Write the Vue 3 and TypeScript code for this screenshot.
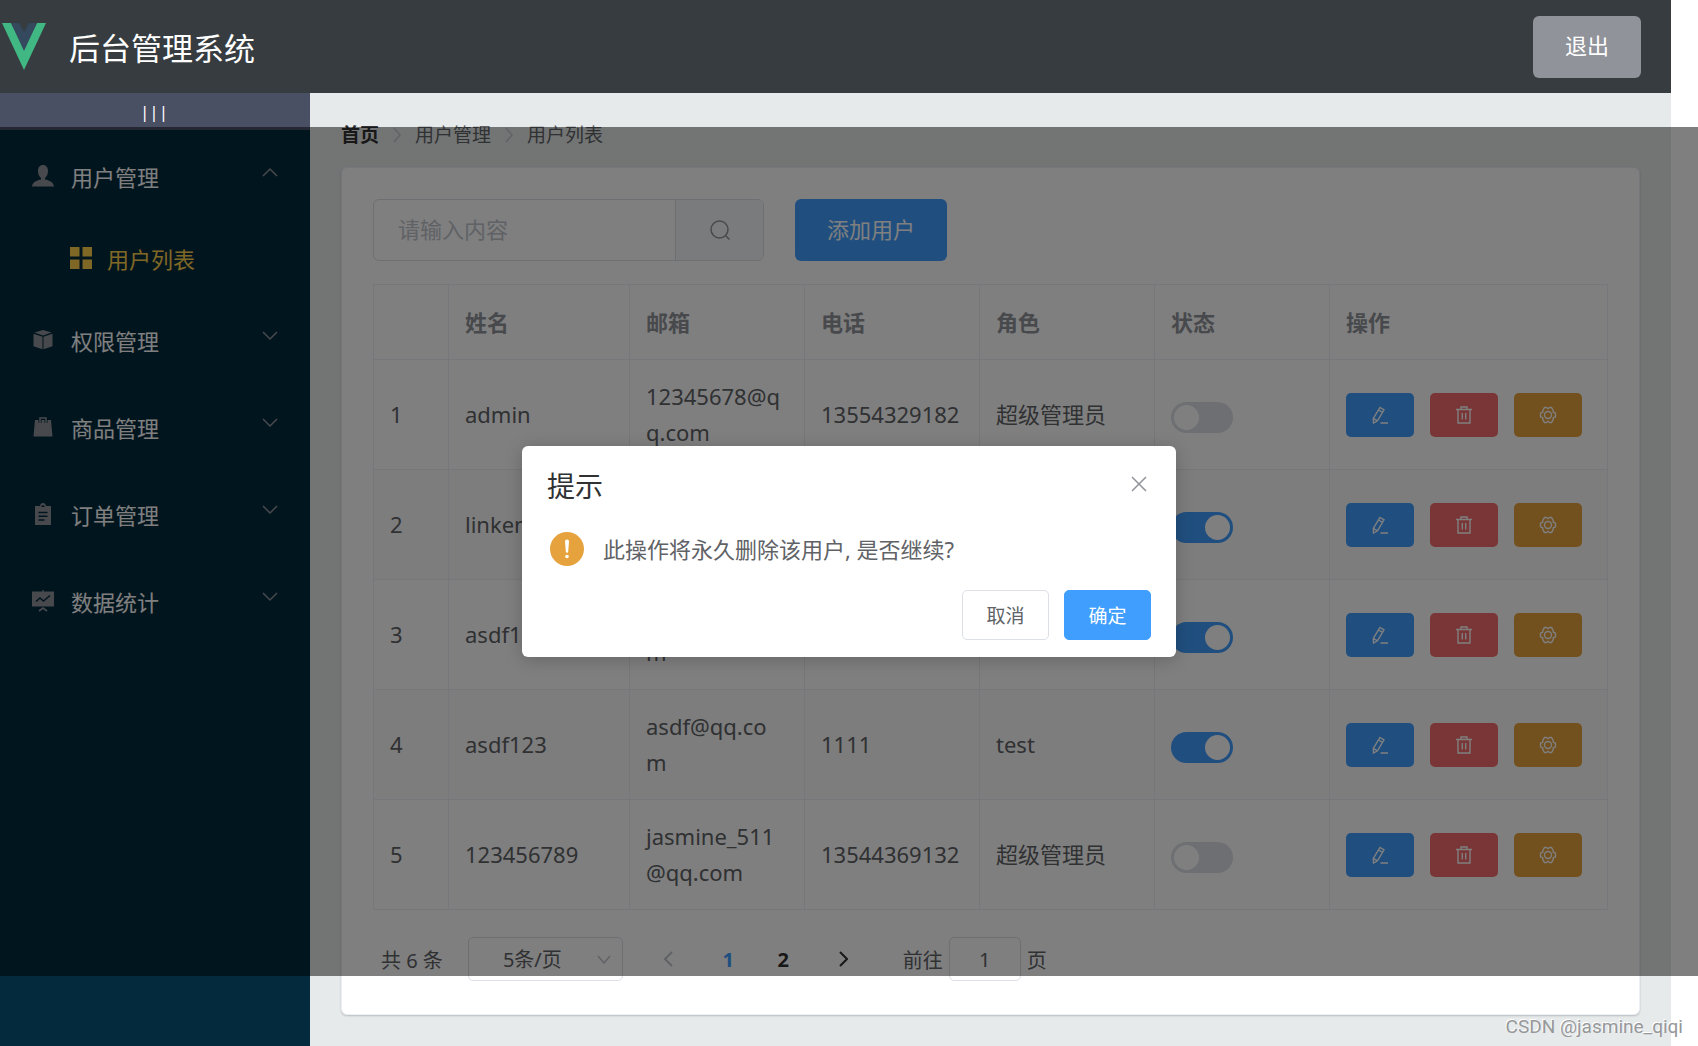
<script setup lang="ts">
import { ref } from 'vue'

interface User {
  id: number
  name: string
  email: string
  phone: string
  role: string
  active: boolean
}

interface Menu {
  title: string
  icon: 'user' | 'box' | 'bag' | 'order' | 'chart'
  children: string[]
}

const menus: Menu[] = [
  { title: '用户管理', icon: 'user', children: ['用户列表'] },
  { title: '权限管理', icon: 'box', children: [] },
  { title: '商品管理', icon: 'bag', children: [] },
  { title: '订单管理', icon: 'order', children: [] },
  { title: '数据统计', icon: 'chart', children: [] },
]

const users = ref<User[]>([
  { id: 1, name: 'admin', email: '12345678@qq.com', phone: '13554329182', role: '超级管理员', active: false },
  { id: 2, name: 'linken', email: '', phone: '', role: '', active: true },
  { id: 3, name: 'asdf1', email: 'asdf@qq.com', phone: '', role: '', active: true },
  { id: 4, name: 'asdf123', email: 'asdf@qq.com', phone: '1111', role: 'test', active: true },
  { id: 5, name: '123456789', email: 'jasmine_511@qq.com', phone: '13544369132', role: '超级管理员', active: false },
])

const query = ref('')
const pageSize = ref('5')
const jumpTo = ref('1')
</script>

<template>
  <div class="page">
    <header class="header">
      <svg class="logo" viewBox="0 0 44 47" aria-hidden="true">
        <path d="M0 0h9l13 25L35 0h9L22 47z" fill="#41b883" />
        <path d="M9 0h8l5 9 5-9h8L22 28z" fill="#35495e" />
      </svg>
      <h1 class="title">后台管理系统</h1>
      <button type="button" class="btn logout">退出</button>
    </header>

    <div class="body">
      <aside class="side">
        <button type="button" class="toggle">|||</button>
        <nav class="menu">
          <template v-for="m in menus" :key="m.title">
            <a href="#" class="item">
              <svg class="m-icon" viewBox="0 0 22 22" aria-hidden="true">
                <template v-if="m.icon === 'user'">
                  <path d="M11 0c3.300 0 5 2.500 5 6 0 3-1.300 5.800-3 7v1.500c4 .8 8.500 2.500 9 7H0c.5-4.500 5-6.200 9-7V13c-1.700-1.200-3-4-3-7 0-3.500 1.700-6 5-6z" />
                </template>
                <template v-else-if="m.icon === 'box'">
                  <path d="M11 1l8.500 2.600L11 6.400 2.500 3.600z" />
                  <path d="M1.500 4.800l9 3v12.400l-9-3z" />
                  <path d="M20.500 4.800l-9 3v12.400l9-3z" />
                </template>
                <template v-else-if="m.icon === 'bag'">
                  <path d="M3 4h16l1.500 16.500h-19z" />
                  <path d="M8 7V2h6v5" fill="none" stroke="#032a3d" stroke-width="3" />
                  <path d="M8 7V2h6v5" fill="none" stroke="#909399" stroke-width="1.500" />
                </template>
                <template v-else-if="m.icon === 'order'">
                  <path d="M3 3h5c.3-2 1.300-3 3-3s2.700 1 3 3h5v19H3z" />
                  <path d="M9.500 3.200h3" stroke="#032a3d" stroke-width="1.600" />
                  <path d="M6.500 9.500h9M6.500 13.200h9M6.500 17h6" stroke="#032a3d" stroke-width="1.500" />
                </template>
                <template v-else>
                  <path d="M0 1.500h10.300V0h1.400v1.500H22v15H0z" />
                  <path d="M7 21l4-3 4 3" fill="none" stroke="#909399" stroke-width="1.800" />
                  <path d="M4 11.500l4-3.500 3.500 3L18 5.500" fill="none" stroke="#032a3d" stroke-width="1.600" />
                </template>
              </svg>
              <span class="m-text">{{ m.title }}</span>
              <svg class="arrow" viewBox="0 0 16 10" aria-hidden="true">
                <path :d="m.children.length ? 'M1 9l7-7 7 7' : 'M1 1l7 7 7-7'" />
              </svg>
            </a>
            <a v-for="c in m.children" :key="c" href="#" class="sub">
              <svg class="m-icon" viewBox="0 0 22 22" aria-hidden="true">
                <path d="M0 0h9.500v9.500H0zM12.500 0H22v9.500h-9.500zM0 12.500h9.500V22H0zM12.500 12.500H22V22h-9.500z" />
              </svg>
              <span>{{ c }}</span>
            </a>
          </template>
        </nav>
      </aside>

      <main class="main">
        <nav class="crumbs">
          <a href="#" class="home">首页</a>
          <svg viewBox="0 0 8 16" aria-hidden="true"><path d="M1 1l6 7-6 7" /></svg>
          <span>用户管理</span>
          <svg viewBox="0 0 8 16" aria-hidden="true"><path d="M1 1l6 7-6 7" /></svg>
          <span>用户列表</span>
        </nav>

        <section class="card">
          <div class="tools">
            <div class="search">
              <input v-model="query" type="text" placeholder="请输入内容" aria-label="搜索用户" />
              <button type="button" aria-label="搜索">
                <svg viewBox="0 0 20 20" aria-hidden="true">
                  <circle cx="9.500" cy="9.500" r="8.500" />
                  <path d="M15.500 15.500l4 4" />
                </svg>
              </button>
            </div>
            <button type="button" class="btn primary">添加用户</button>
          </div>

          <table class="table">
            <colgroup>
              <col class="c-index" />
              <col class="c-name" />
              <col span="4" />
              <col class="c-ops" />
            </colgroup>
            <thead>
              <tr>
                <th></th>
                <th>姓名</th>
                <th>邮箱</th>
                <th>电话</th>
                <th>角色</th>
                <th>状态</th>
                <th>操作</th>
              </tr>
            </thead>
            <tbody>
              <tr v-for="u in users" :key="u.id">
                <td>{{ u.id }}</td>
                <td>{{ u.name }}</td>
                <td>{{ u.email }}</td>
                <td>{{ u.phone }}</td>
                <td>{{ u.role }}</td>
                <td><input v-model="u.active" type="checkbox" class="switch" :aria-label="'状态 ' + u.name" /></td>
                <td class="ops-cell">
                  <div class="ops">
                    <button type="button" class="op edit" aria-label="编辑">
                      <svg viewBox="0 0 18 18" aria-hidden="true">
                        <path d="M9 1.500l4 2.300-6.500 11L2.500 17l-.2-4.500zM7.500 4l4 2.300M2.500 12.500l4 2.300M9.500 17H17" />
                      </svg>
                    </button>
                    <button type="button" class="op delete" aria-label="删除">
                      <svg viewBox="0 0 18 18" aria-hidden="true">
                        <path d="M1 3.500h16M6 3.500V1h6v2.500M3 3.500V17h12V3.500M7.300 7v6.500M10.700 7v6.500" />
                      </svg>
                    </button>
                    <button type="button" class="op assign" aria-label="分配角色">
                      <svg viewBox="0 0 18 18" aria-hidden="true">
                        <path d="M5.500 1.500h2L9 2.700l1.500-1.200h2l1.700 3 .1 1.700 2.200 1v3.600l-2.200 1-.1 1.700-1.700 3h-2L9 15.300l-1.500 1.200h-2l-1.700-3-.1-1.700-2.200-1V7.200l2.200-1 .1-1.700z" />
                        <circle cx="9" cy="9" r="3.500" />
                      </svg>
                    </button>
                  </div>
                </td>
              </tr>
            </tbody>
          </table>

          <div class="pager">
            <span class="total">共 6 条</span>
            <span class="size">
              <select v-model="pageSize" aria-label="每页条数">
                <option value="5">5条/页</option>
                <option value="10">10条/页</option>
              </select>
              <svg viewBox="0 0 14 9" aria-hidden="true"><path d="M1 1l6 7 6-7" /></svg>
            </span>
            <button type="button" class="prev" disabled aria-label="上一页">
              <svg viewBox="0 0 9 16" aria-hidden="true"><path d="M8 1L1 8l7 7" /></svg>
            </button>
            <button type="button" class="num current">1</button>
            <button type="button" class="num">2</button>
            <button type="button" class="next" aria-label="下一页">
              <svg viewBox="0 0 9 16" aria-hidden="true"><path d="M1 1l7 7-7 7" /></svg>
            </button>
            <label class="jump">前往<input v-model="jumpTo" type="text" />页</label>
          </div>
        </section>
      </main>
    </div>

    <div class="overlay">
      <div class="dialog" role="dialog" aria-labelledby="dialog-title">
        <div class="d-head">
          <h2 id="dialog-title">提示</h2>
          <button type="button" class="close" aria-label="关闭">
            <svg viewBox="0 0 16 16" aria-hidden="true"><path d="M1 1l14 14M15 1L1 15" /></svg>
          </button>
        </div>
        <div class="d-body">
          <svg viewBox="0 0 34 34" aria-hidden="true">
            <circle cx="17" cy="17" r="17" fill="#e6a23c" />
            <path d="M15 9.500a2 2 0 0 1 4 0l-.8 10a1.200 1.200 0 0 1-2.400 0z" fill="#fff" />
            <circle cx="17" cy="24.500" r="1.800" fill="#fff" />
          </svg>
          <p>此操作将永久删除该用户, 是否继续?</p>
        </div>
        <div class="d-foot">
          <button type="button" class="cancel">取消</button>
          <button type="button" class="confirm">确定</button>
        </div>
      </div>
    </div>

    <div class="watermark">CSDN @jasmine_qiqi</div>
  </div>
</template>

<style>
body {
  margin: 0;
  background: #fff;
}
</style>

<style scoped>
.page {
  position: relative;
  display: flex;
  flex-direction: column;
  min-height: 100vh;
  padding-right: 27px;
  box-sizing: border-box;
  font-family: "Noto Sans", "Noto Sans CJK SC", sans-serif;
  font-size: 22px;
  color: #606266;
}

button,
input,
select {
  font: inherit;
  color: inherit;
  margin: 0;
  padding: 0;
  border: 0;
  background: none;
  box-sizing: border-box;
}

a {
  color: inherit;
  text-decoration: none;
}

svg {
  flex: none;
  fill: none;
}

.header {
  display: flex;
  align-items: center;
  height: 93px;
  padding: 0 30px 0 2px;
  background: #363c3f;
}

.logo {
  width: 44px;
  height: 47px;
}

.title {
  flex: 1;
  margin: 2px 0 0 23px;
  font-size: 31px;
  font-weight: 400;
  line-height: 40px;
  color: #fff;
}

.btn {
  height: 62px;
  padding: 0 32px 5px;
  border-radius: 6px;
  color: #fff;
}

.logout {
  background: #909399;
}

.primary {
  background: #409eff;
}

.body {
  display: flex;
  flex: 1;
}

.side {
  flex: none;
  width: 310px;
  background: #032a3d;
}

.toggle {
  display: block;
  width: 100%;
  height: 37px;
  padding-right: 2px;
  background: #4a5064;
  color: #fff;
  font-size: 17px;
  line-height: 37px;
}

.menu {
  padding-top: 2px;
  color: #fff;
}

.item,
.sub {
  display: flex;
  align-items: center;
}

.item {
  height: 87px;
  padding: 0 32px;
}

.sub {
  height: 77px;
  padding-left: 70px;
  gap: 15px;
  color: #ffd04b;
}

.m-icon {
  width: 22px;
  height: 22px;
  fill: #909399;
}

.sub .m-icon {
  fill: #ffd04b;
}

.m-text {
  flex: 1;
  margin-left: 17px;
}

.arrow {
  width: 16px;
  height: 10px;
  margin-bottom: 8px;
  stroke: #909399;
  stroke-width: 1.5;
}

.main {
  flex: 1;
  min-width: 0;
  padding: 31px;
  background: #e6eaeb;
}

.crumbs {
  display: flex;
  align-items: center;
  gap: 14px;
  height: 22px;
  font-size: 19px;
  line-height: 22px;
}

.crumbs svg {
  width: 8px;
  height: 16px;
  stroke: #c0c4cc;
  stroke-width: 1.5;
}

.home {
  font-weight: 700;
  color: #303133;
}

.card {
  margin-top: 21px;
  padding: 31px 31px 33px;
  border: 1px solid #ebeef5;
  border-radius: 6px;
  background: #fff;
  box-shadow: 0 1px 2px rgba(0, 0, 0, 0.2);
}

.tools {
  display: flex;
  gap: 31px;
}

.search {
  display: flex;
  width: 391px;
  height: 62px;
  border: 1px solid #dcdfe6;
  border-radius: 6px;
  box-sizing: border-box;
  overflow: hidden;
}

.search input {
  flex: 1;
  min-width: 0;
  padding: 0 24px 2px;
}

.search input::placeholder {
  color: #c0c4cc;
}

.search button {
  display: flex;
  align-items: center;
  justify-content: center;
  width: 88px;
  border-left: 1px solid #dcdfe6;
  background: #f5f7fa;
}

.search svg {
  width: 20px;
  height: 20px;
  stroke: #909399;
  stroke-width: 1.5;
}

.table {
  width: 100%;
  margin-top: 23px;
  table-layout: fixed;
  border-collapse: separate;
  border-spacing: 0;
  border-top: 1px solid #ebeef5;
  border-left: 1px solid #ebeef5;
}

.c-index {
  width: 75px;
}

.c-name {
  width: 181px;
}

.c-ops {
  width: 278px;
}

.table th,
.table td {
  padding: 0 18px 0 16px;
  border-right: 1px solid #ebeef5;
  border-bottom: 1px solid #ebeef5;
  box-sizing: border-box;
  line-height: 36px;
  text-align: left;
  word-break: break-all;
}

.table th {
  height: 75px;
  color: #909399;
  font-weight: 700;
}

.table td {
  height: 110px;
  padding-bottom: 2px;
}

.table .ops-cell {
  padding-bottom: 0;
}

.table tbody tr:nth-child(even) {
  background: #fafafa;
}

.switch {
  display: block;
  appearance: none;
  width: 62px;
  height: 31px;
  margin-top: 8px;
  padding: 3px;
  border-radius: 16px;
  background: #dcdfe6;
}

.switch::before {
  content: "";
  display: block;
  width: 25px;
  height: 25px;
  border-radius: 50%;
  background: #fff;
}

.switch:checked {
  background: #409eff;
}

.switch:checked::before {
  margin-left: auto;
}

.ops {
  display: flex;
  gap: 16px;
}

.op {
  display: flex;
  align-items: center;
  justify-content: center;
  width: 68px;
  height: 44px;
  border-radius: 5px;
}

.op svg {
  width: 18px;
  height: 18px;
  stroke: #fff;
  stroke-width: 1.4;
}

.edit {
  background: #409eff;
}

.delete {
  background: #f56c6c;
}

.assign {
  background: #e6a23c;
}

.pager {
  display: flex;
  align-items: center;
  height: 44px;
  margin-top: 27px;
  padding-left: 8px;
  font-size: 20px;
}

.size {
  display: grid;
  align-items: center;
  width: 155px;
  height: 44px;
  margin-left: 25px;
}

.size select,
.size svg {
  grid-area: 1 / 1;
}

.size select {
  appearance: none;
  width: 100%;
  height: 44px;
  padding-right: 26px;
  border: 1px solid #dcdfe6;
  border-radius: 5px;
  text-align-last: center;
}

.size svg {
  justify-self: end;
  width: 14px;
  height: 9px;
  margin-right: 12px;
  stroke: #c0c4cc;
  stroke-width: 1.5;
}

.prev,
.next {
  display: flex;
  align-items: center;
  justify-content: center;
  width: 60px;
  height: 44px;
}

.prev {
  margin-left: 18px;
  padding-right: 4px;
}

.next {
  padding-left: 6px;
}

.prev svg,
.next svg {
  width: 9px;
  height: 16px;
  stroke: #303133;
  stroke-width: 2;
}

.prev svg {
  stroke: #c0c4cc;
}

.num {
  width: 55px;
  height: 44px;
  font-weight: 700;
  color: #303133;
}

.current {
  color: #409eff;
}

.jump {
  display: flex;
  align-items: center;
  gap: 6px;
  margin-left: 32px;
}

.jump input {
  width: 72px;
  height: 44px;
  border: 1px solid #dcdfe6;
  border-radius: 5px;
  text-align: center;
}

.overlay {
  position: absolute;
  top: 127px;
  right: 0;
  bottom: 70px;
  left: 0;
  display: flex;
  align-items: center;
  justify-content: center;
  background: rgba(0, 0, 0, 0.5);
}

.dialog {
  width: 654px;
  padding: 24px 25px 17px;
  border-radius: 6px;
  box-sizing: border-box;
  background: #fff;
  box-shadow: 0 3px 18px rgba(0, 0, 0, 0.2);
}

.d-head {
  display: flex;
  align-items: center;
  justify-content: space-between;
  height: 32px;
}

.d-head h2 {
  margin: 0;
  font-size: 28px;
  font-weight: 400;
  line-height: 32px;
  color: #303133;
}

.close {
  display: flex;
  padding: 2px 4px 6px;
}

.close svg {
  width: 16px;
  height: 16px;
  stroke: #909399;
  stroke-width: 1.5;
}

.d-body {
  display: flex;
  align-items: center;
  gap: 19px;
  margin-top: 29px;
  padding-left: 3px;
}

.d-body svg {
  width: 34px;
  height: 34px;
}

.d-body p {
  margin: 0;
  line-height: 36px;
}

.d-foot {
  display: flex;
  justify-content: flex-end;
  gap: 15px;
  margin-top: 23px;
  font-size: 19px;
}

.d-foot button {
  width: 87px;
  height: 50px;
  border: 1px solid #dcdfe6;
  border-radius: 5px;
}

.d-foot .confirm {
  border-color: #409eff;
  background: #409eff;
  color: #fff;
}

.watermark {
  position: absolute;
  right: 15px;
  bottom: 8px;
  font-family: Roboto, "Liberation Sans", sans-serif;
  font-size: 19px;
  line-height: 22px;
  color: #96989a;
  text-shadow: -1px -1px 0 #fff;
}
</style>
